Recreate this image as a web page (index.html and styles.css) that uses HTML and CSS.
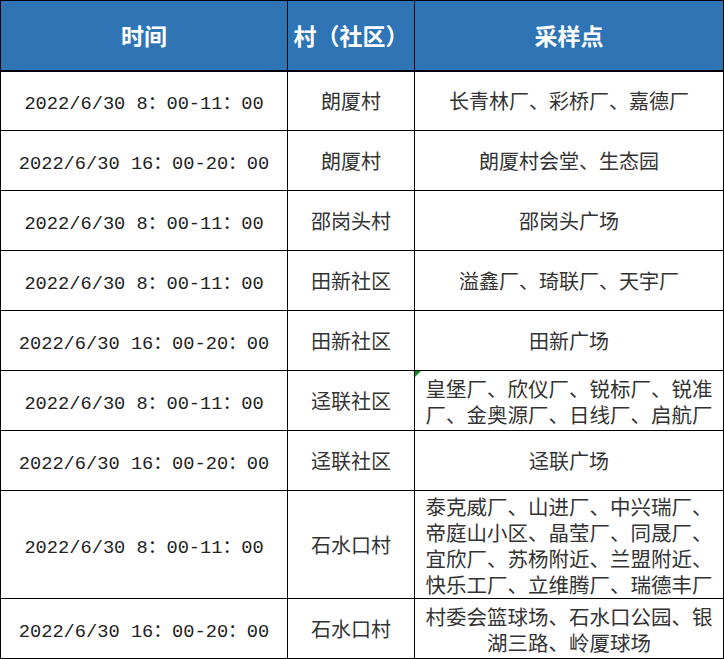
FILE: index.html
```html
<!DOCTYPE html>
<html lang="zh-CN">
<head>
<meta charset="utf-8">
<title>采样点</title>
<link rel="stylesheet" href="styles.css">
</head>
<body>
<table class="sheet">
  <colgroup>
    <col class="c-time">
    <col class="c-vil">
    <col class="c-site">
  </colgroup>
  <thead>
    <tr class="head">
      <th>时间</th>
      <th>村（社区）</th>
      <th>采样点</th>
    </tr>
  </thead>
  <tbody>
    <tr class="r">
      <td class="time">2022/6/30 8：00-11：00</td>
      <td class="txt">朗厦村</td>
      <td class="txt">长青林厂、彩桥厂、嘉德厂</td>
    </tr>
    <tr class="r">
      <td class="time">2022/6/30 16：00-20：00</td>
      <td class="txt">朗厦村</td>
      <td class="txt">朗厦村会堂、生态园</td>
    </tr>
    <tr class="r">
      <td class="time">2022/6/30 8：00-11：00</td>
      <td class="txt">邵岗头村</td>
      <td class="txt">邵岗头广场</td>
    </tr>
    <tr class="r">
      <td class="time">2022/6/30 8：00-11：00</td>
      <td class="txt">田新社区</td>
      <td class="txt">溢鑫厂、琦联厂、天宇厂</td>
    </tr>
    <tr class="r">
      <td class="time">2022/6/30 16：00-20：00</td>
      <td class="txt">田新社区</td>
      <td class="txt">田新广场</td>
    </tr>
    <tr class="r">
      <td class="time">2022/6/30 8：00-11：00</td>
      <td class="txt">迳联社区</td>
      <td class="txt multi flag"><span class="mark"></span>皇堡厂、欣仪厂、锐标厂、锐准<br>厂、金奥源厂、日线厂、启航厂</td>
    </tr>
    <tr class="r">
      <td class="time">2022/6/30 16：00-20：00</td>
      <td class="txt">迳联社区</td>
      <td class="txt">迳联广场</td>
    </tr>
    <tr class="r tall">
      <td class="time">2022/6/30 8：00-11：00</td>
      <td class="txt">石水口村</td>
      <td class="txt multi">泰克威厂、山进厂、中兴瑞厂、<br>帝庭山小区、晶莹厂、同晟厂、<br>宜欣厂、苏杨附近、兰盟附近、<br>快乐工厂、立维腾厂、瑞德丰厂</td>
    </tr>
    <tr class="r">
      <td class="time">2022/6/30 16：00-20：00</td>
      <td class="txt">石水口村</td>
      <td class="txt multi">村委会篮球场、石水口公园、银<br>湖三路、岭厦球场</td>
    </tr>
  </tbody>
</table>
</body>
</html>
```

FILE: styles.css
```css
html, body {
  margin: 0;
  padding: 0;
  background: #ffffff;
}

.sheet {
  border-collapse: collapse;
  table-layout: fixed;
  width: 723px;
}

.c-time { width: 287px; }
.c-vil { width: 127px; }
.c-site { width: 309px; }

.sheet th,
.sheet td {
  border: 1px solid #000000;
  padding: 0;
  text-align: center;
  vertical-align: middle;
  overflow: hidden;
  white-space: nowrap;
}

.head {
  height: 70px;
  background: #2f75b5;
}

.head th {
  color: #ffffff;
  font-family: "Noto Sans CJK SC", "Noto Sans", sans-serif;
  font-weight: 700;
  font-size: 23px;
  line-height: 28px;
  border-bottom: 2px solid #000000;
}

.r { height: 60px; }
.r.tall { height: 108px; }

.time {
  font-family: "Liberation Mono", "Noto Sans CJK SC", monospace;
  font-size: 18.7px;
  color: #222222;
}

.txt {
  font-family: "Noto Sans CJK SC", sans-serif;
  font-size: 20px;
  color: #333333;
  font-weight: 400;
}

.multi {
  line-height: 26px;
  font-size: 20.5px;
}

.flag { position: relative; }

.mark {
  position: absolute;
  left: 0;
  top: 0;
  width: 6px;
  height: 6px;
  background: #0f8a1e;
  clip-path: polygon(0 0, 100% 0, 0 100%);
}
```
